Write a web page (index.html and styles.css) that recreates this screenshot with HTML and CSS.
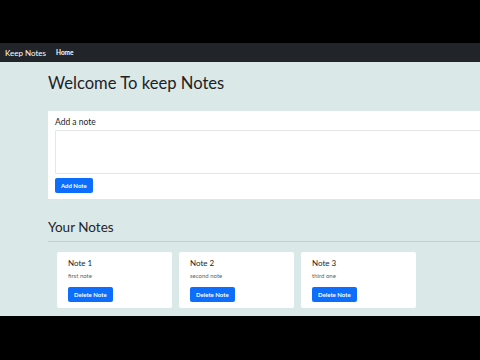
FILE: index.html
```html
<!DOCTYPE html>
<html>
<head>
<meta charset="utf-8">
<link rel="stylesheet" href="styles.css">
</head>
<body>
<div class="letterbox top"></div>
<nav class="navbar">
  <span class="brand">Keep Notes</span>
  <span class="nav-link">Home</span>
</nav>
<main class="page">
  <h1 class="title">Welcome To keep Notes</h1>
  <section class="add-card">
    <label class="add-label">Add a note</label>
    <div class="textarea"></div>
    <button class="btn btn-add">Add Note</button>
  </section>
  <h2 class="subtitle">Your Notes</h2>
  <hr class="divider">
  <div class="notes">
    <div class="note">
      <div class="note-title">Note 1</div>
      <div class="note-text">first note</div>
      <button class="btn btn-del">Delete Note</button>
    </div>
    <div class="note">
      <div class="note-title">Note 2</div>
      <div class="note-text">second note</div>
      <button class="btn btn-del">Delete Note</button>
    </div>
    <div class="note">
      <div class="note-title">Note 3</div>
      <div class="note-text">third one</div>
      <button class="btn btn-del">Delete Note</button>
    </div>
  </div>
</main>
<div class="letterbox bottom"></div>
</body>
</html>
```
FILE: styles.css
```css
html, body {
  margin: 0;
  padding: 0;
}
body {
  width: 480px;
  height: 360px;
  overflow: hidden;
  background: #000;
  font-family: Lato, "Open Sans", sans-serif;
  color: #212529;
}
.letterbox.top { height: 43px; }
.letterbox.bottom { height: 44px; }
.navbar {
  height: 19px;
  background: #212529;
  display: flex;
  align-items: center;
  padding-left: 5px;
  gap: 10px;
}
.brand {
  color: #fff;
  font-size: 8px;
  line-height: 12px;
}
.nav-link {
  color: #fff;
  font-size: 6.5px;
  line-height: 10px;
  font-weight: 700;
}
.page {
  box-sizing: border-box;
  height: 254px;
  background: #dae8e8;
  padding-left: 48px;
  overflow: hidden;
  display: flex;
  flex-direction: column;
}
.title {
  margin: 6.5px 0 0;
  font-size: 16.6px;
  line-height: 28px;
  font-weight: 400;
  color: #1e2226;
}
.add-card {
  margin-top: 14.5px;
  background: #fff;
  height: 88px;
  box-sizing: border-box;
  padding: 5px 0 6px 7px;
  display: flex;
  flex-direction: column;
  align-items: flex-start;
}
.add-label {
  font-size: 8.5px;
  line-height: 12px;
  margin-bottom: 2px;
}
.textarea {
  align-self: stretch;
  height: 44px;
  box-sizing: border-box;
  border: 1px solid #e4e6e8;
  border-right: none;
  border-radius: 2px 0 0 2px;
}
.btn {
  border: none;
  background: #0d6efd;
  color: #fff;
  font-family: inherit;
  font-size: 6px;
  font-weight: 700;
  height: 15px;
  padding: 0 6px;
  border-radius: 2px;
  line-height: 15px;
}
.btn-add { margin-top: 4px; }
.subtitle {
  margin: 17.8px 0 0;
  font-size: 13.5px;
  line-height: 20px;
  font-weight: 400;
}
.divider {
  margin: 4px 0 0;
  border: none;
  border-top: 1px solid #c3d0d0;
  height: 0;
}
.notes {
  margin-top: 10px;
  padding-left: 9px;
  display: flex;
  gap: 7px;
}
.note {
  width: 115px;
  height: 56px;
  box-sizing: border-box;
  background: #fff;
  border-radius: 2px;
  padding: 5px 0 0 11px;
  display: flex;
  flex-direction: column;
  align-items: flex-start;
}
.note-title {
  font-size: 8px;
  line-height: 12px;
}
.note-text {
  margin-top: 2.2px;
  font-size: 6px;
  line-height: 9px;
  color: #5a5f64;
}
.btn-del { margin-top: 6.8px; }
```
